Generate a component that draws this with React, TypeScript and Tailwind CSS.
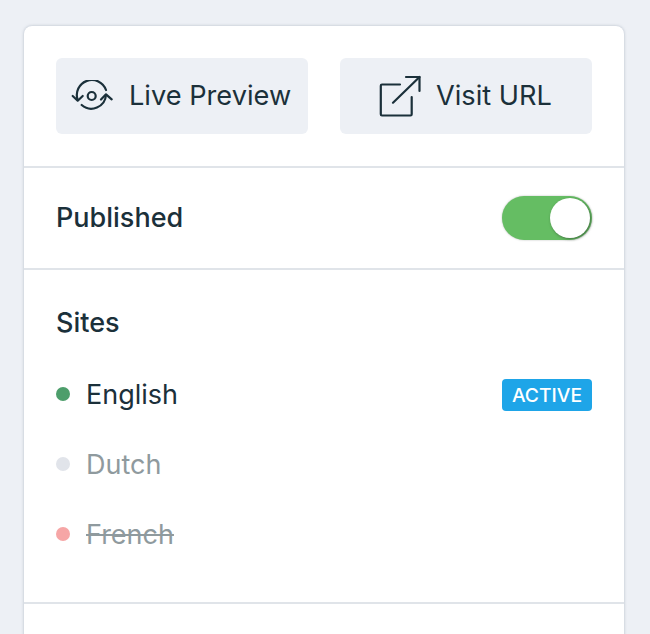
import React from "react";

function PreviewIcon() {
  return (
    <svg width="42" height="32" viewBox="0 0 42 32" fill="none" stroke="#1b303a" strokeWidth="2.2" strokeLinecap="round" strokeLinejoin="round" className="shrink-0">
      <path d="M6.700 20A14.700 14.700 0 0 1 35 10" />
      <path d="M1.700 16l5 4.700 5-4.700" />
      <path d="M35 15A14.700 14.700 0 0 1 10.700 25" />
      <path d="M30 19.500l5-5.200 5.700 5" />
      <circle cx="20.700" cy="16" r="4" />
    </svg>
  );
}

function ExternalIcon() {
  return (
    <svg width="42" height="42" viewBox="0 0 42 42" fill="none" stroke="#1b303a" strokeWidth="2.2" strokeLinecap="round" strokeLinejoin="round" className="shrink-0">
      <path d="M21 9.500H3a1.200 1.200 0 0 0-1.200 1.200v28.600A1.200 1.200 0 0 0 3 40.500h28.500a1.200 1.200 0 0 0 1.200-1.200V22" />
      <path d="M14 27.700 40.500 2" />
      <path d="M27 2h13.500v14" />
    </svg>
  );
}

function Site({ dot, text, label, strike }: { dot: string; text: string; label: string; strike?: boolean }) {
  return (
    <div className="flex h-[70px] items-center">
      <span className={`h-[14px] w-[14px] rounded-full ${dot}`} />
      <span className={`ml-[16px] text-[27px] leading-none ${text} ${strike ? "line-through" : ""}`}>{label}</span>
    </div>
  );
}

export default function App() {
  return (
    <div className="h-[634px] w-[650px] overflow-hidden bg-[#edf0f5] pl-6 pr-[26px] pt-[26px] font-['Inter',sans-serif] text-[#1b303a]">
      <div className="h-[640px] rounded-t-[8px] bg-white shadow-[0_0_3px_rgba(120,135,155,0.5)]">
        <div className="flex gap-8 border-b-2 border-[#e0e4e9] p-8">
          <div className="flex h-[76px] w-[252px] items-center gap-4 rounded-[6px] bg-[#edf0f5] pl-[15px] text-[27.2px]">
            <PreviewIcon />
            <span>Live Preview</span>
          </div>
          <div className="flex h-[76px] w-[252px] items-center gap-[15px] rounded-[6px] bg-[#edf0f5] pl-[39px] text-[27.2px]">
            <ExternalIcon />
            <span>Visit URL</span>
          </div>
        </div>

        <div className="flex h-[102px] items-center justify-between border-b-2 border-[#e0e4e9] px-8">
          <span className="text-[27px] font-medium">Published</span>
          <div className="flex h-[44px] w-[90px] items-center justify-end rounded-full bg-[#65bd63] pr-[2px] shadow-[0_0_2px_rgba(90,100,90,0.45)]">
            <span className="h-10 w-10 rounded-full bg-white shadow-[1px_1px_3px_rgba(40,60,40,0.6)]" />
          </div>
        </div>

        <div className="h-[334px] border-b-2 border-[#e0e4e9] px-8 pt-[37px]">
          <div className="mb-[20px] text-[27px] font-medium leading-[32px]">Sites</div>
          <div className="relative">
            <Site dot="bg-[#4d9e6b]" text="text-[#1b303a]" label="English" />
            <span className="absolute right-0 top-5 w-[90px] rounded-[4px] bg-[#1ea5e8] py-[4px] text-center text-[19.3px] font-medium leading-6 text-white">ACTIVE</span>
            <Site dot="bg-[#e1e4ea]" text="text-[#8f9a9e]" label="Dutch" />
            <Site dot="bg-[#f6a6a6]" text="text-[#8f9a9e]" label="French" strike />
          </div>
        </div>
      </div>
    </div>
  );
}
